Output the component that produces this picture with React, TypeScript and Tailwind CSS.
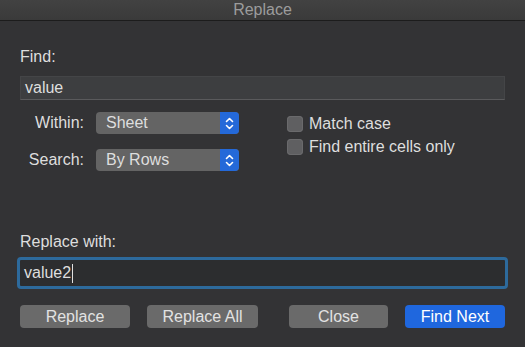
import React from "react";

function Stepper() {
  return (
    <div className="flex h-full w-[19px] items-center justify-center rounded-r-[4px] bg-[#2469d9]">
      <svg width="9" height="15" viewBox="0 0 9 15" fill="none" stroke="#ffffff" strokeWidth="1.6" strokeLinecap="round" strokeLinejoin="round">
        <path d="M1.5 5.5 L4.5 2.5 L7.5 5.5" />
        <path d="M1.5 9.5 L4.5 12.5 L7.5 9.5" />
      </svg>
    </div>
  );
}

function SelectRow({ label, value }: { label: string; value: string }) {
  return (
    <div className="flex h-[22px] items-center">
      <span className="w-[64px] text-right">{label}</span>
      <div className="ml-[12px] flex h-full w-[143px] items-center rounded-[4px] bg-[#646464]">
        <span className="flex-1 pl-[10px] leading-none">{value}</span>
        <Stepper />
      </div>
    </div>
  );
}

function Check({ label }: { label: string }) {
  return (
    <label className="flex h-[23px] items-center">
      <span className="h-[16px] w-[16px] rounded-[4px] bg-[#5f5f61] shadow-[inset_0_0_0_1px_#6a6a6c]" />
      <span className="ml-[6px]">{label}</span>
    </label>
  );
}

function Btn({ children, w, primary }: { children: React.ReactNode; w: string; primary?: boolean }) {
  return (
    <button
      className={
        primary
          ? `${w} h-[23px] rounded-[4px] bg-[#1f67de] text-white`
          : `${w} h-[23px] rounded-[4px] bg-[#6a6a6a] text-[#e2e2e2]`
      }
    >
      {children}
    </button>
  );
}

export default function App() {
  return (
    <div className="flex h-[347px] w-[525px] flex-col overflow-hidden bg-[#333335] font-['Liberation_Sans',Arial,sans-serif] text-[16px] text-[#dedede]">
      {/* title bar */}
      <div className="flex h-[21px] items-center justify-center border-b border-[#1c1c1c] bg-gradient-to-b from-[#424242] to-[#3a3a3a] text-[#9c9c9c]">
        Replace
      </div>

      <div className="flex flex-col px-[20px]">
        <div className="mt-[26px] leading-[20px]">Find:</div>
        <div className="mt-[9px] flex h-[24px] items-center border border-[#444547] border-b-[#5a5a5c] bg-[#3d3e40] pl-[4px]">
          value
        </div>

        <div className="mt-[12px] flex">
          <div className="flex flex-col gap-[15px]">
            <SelectRow label="Within:" value="Sheet" />
            <SelectRow label="Search:" value="By Rows" />
          </div>
          <div className="ml-[48px] flex flex-col">
            <Check label="Match case" />
            <Check label="Find entire cells only" />
          </div>
        </div>

        <div className="mt-[61px] leading-[20px]">Replace with:</div>
        <div className="-mx-[3px] mt-[5px] flex h-[32px] items-center rounded-[4px] border-[3px] border-[#2d6a9c] bg-[#2c2d2f] pl-[4px]">
          <span>value2</span>
          <span className="ml-[1px] h-[19px] w-[1px] bg-[#e0e0e0]" />
        </div>

        <div className="mt-[16px] flex">
          <Btn w="w-[110px]">Replace</Btn>
          <Btn w="ml-[17px] w-[111px]">Replace All</Btn>
          <Btn w="ml-[31px] w-[99px]">Close</Btn>
          <Btn w="ml-[17px] w-[100px]" primary>
            Find Next
          </Btn>
        </div>
      </div>
    </div>
  );
}
